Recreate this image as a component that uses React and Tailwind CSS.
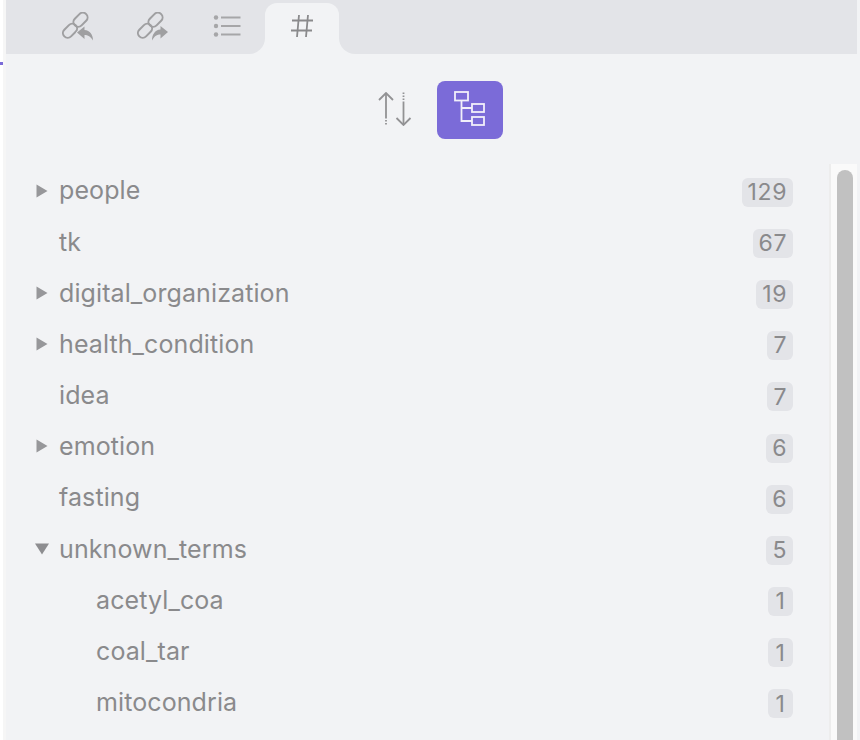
const tags = [
  { name: 'people', count: 129, arrow: 'right' },
  { name: 'tk', count: 67 },
  { name: 'digital_organization', count: 19, arrow: 'right' },
  { name: 'health_condition', count: 7, arrow: 'right' },
  { name: 'idea', count: 7 },
  { name: 'emotion', count: 6, arrow: 'right' },
  { name: 'fasting', count: 6 },
  { name: 'unknown_terms', count: 5, arrow: 'down' },
  { name: 'acetyl_coa', count: 1, child: true },
  { name: 'coal_tar', count: 1, child: true },
  { name: 'mitocondria', count: 1, child: true },
];

function LinkIcon({ flip }) {
  return (
    <svg width="32" height="29" viewBox="0 0 32 29" fill="none">
      <g stroke="#9f9fa1" strokeWidth="2">
        <rect x="0" y="14" width="16" height="9.500" rx="4.750" transform="rotate(-45 8 18.750)" />
        <rect x="10.500" y="3" width="16" height="9.500" rx="4.750" transform="rotate(-45 18.500 7.750)" />
      </g>
      {flip ? (
        <path
          d="M15 28.500c0-6 3-10.500 8.500-11V14l7.500 6-7.500 6.500v-4c-3.500 0-6 1.500-8.500 6z"
          fill="#9f9fa1"
          stroke="#e3e4e8"
          strokeWidth="1.500"
          paintOrder="stroke"
        />
      ) : (
        <path
          d="M31 28.500c0-6-3-10-8.500-10.500v-3.500L15 20.500l7.500 6.500v-4c3.500 0 6 1.500 8.500 5.500z"
          fill="#9f9fa1"
          stroke="#e3e4e8"
          strokeWidth="1.500"
          paintOrder="stroke"
        />
      )}
    </svg>
  );
}

function ListIcon() {
  return (
    <svg width="28" height="24" viewBox="0 0 28 24" fill="#a6a6a8">
      <circle cx="3" cy="3.500" r="2.200" />
      <circle cx="3" cy="12" r="2.200" />
      <circle cx="3" cy="20.500" r="2.200" />
      <rect x="8" y="2.500" width="19.500" height="2" />
      <rect x="8" y="11" width="19.500" height="2" />
      <rect x="8" y="19.500" width="19.500" height="2" />
    </svg>
  );
}

function HashIcon() {
  return (
    <svg width="22" height="22" viewBox="0 0 22 22" fill="none" stroke="#8a8a8c" strokeWidth="1.800">
      <path d="M1 5.500h21M0 15.500h21M8 0 6 22M17 0 15 22" />
    </svg>
  );
}

function SortIcon() {
  return (
    <svg width="34" height="34" viewBox="0 0 34 34" fill="none" stroke="#929294" strokeWidth="1.800">
      <path d="M1 8 8 1l7 7" />
      <path d="M8 1.500V25" />
      <path d="M8 25v8.500" strokeDasharray="1.500 1.500" />
      <path d="M25.500 0.500V10" strokeDasharray="1.500 1.500" />
      <path d="M25.500 10v22.500" />
      <path d="M18.500 26l7 7 7-7" />
    </svg>
  );
}

function TreeIcon() {
  return (
    <svg width="32" height="36" viewBox="0 0 32 36" fill="none" stroke="#f1effa" strokeWidth="1.800">
      <rect x="1" y="1" width="13" height="8.500" />
      <rect x="18" y="13" width="12" height="8" />
      <rect x="18" y="26" width="12" height="8" />
      <path d="M7.500 9.500V30H18M7.500 17H18" />
    </svg>
  );
}

function Arrow({ dir }) {
  if (dir === 'right') {
    return (
      <svg width="12" height="14" viewBox="0 0 12 14" fill="#97979a">
        <path d="M0.500 0.500 11.500 7 0.500 13.500z" />
      </svg>
    );
  }
  return (
    <svg width="14" height="12" viewBox="0 0 14 12" fill="#8d8d90">
      <path d="M0 0.500h14L7 11.500z" />
    </svg>
  );
}

function TagRow({ tag }) {
  return (
    <div className={`relative flex h-[51.2px] items-center pr-[36px] ${tag.child ? 'pl-[96px]' : 'pl-[59px]'}`}>
      {tag.arrow && (
        <span className={`absolute top-[18px] flex h-[14px] w-[14px] items-center ${tag.arrow === 'down' ? 'left-[35px]' : 'left-[36px]'}`}>
          <Arrow dir={tag.arrow} />
        </span>
      )}
      <span className="flex-1 text-[25px] tracking-[0.1px] text-[#8a8a8c]">{tag.name}</span>
      <span className="mt-[2px] flex h-[29px] min-w-[25px] items-center justify-center rounded-[6px] bg-[#e3e4e8] px-[6px] text-[23px] tracking-[0.6px] text-[#8a8a8c]">
        {tag.count}
      </span>
    </div>
  );
}

export default function App() {
  return (
    <div className="flex h-[740px] w-[860px] overflow-hidden bg-[#f2f3f5] font-['Inter',sans-serif]">
      {/* thin pane edge, with the resize handle mark */}
      <div className="relative w-[6px] shrink-0 border-r-[3px] border-[#f6f6f6] bg-white">
        <div className="absolute left-0 top-[62px] h-[3px] w-[3px] bg-[#7b6bd8]" />
      </div>
      <div className="flex min-w-0 flex-1 flex-col">
        <div className="flex h-[54px] shrink-0 items-end bg-[#e3e4e8] pl-[56px]">
          <div className="flex h-full w-[203px] items-center">
            <div className="w-[75px] pb-[1px]"><LinkIcon /></div>
            <div className="w-[76px] pb-[1px]"><LinkIcon flip /></div>
            <div className="pb-[3px]"><ListIcon /></div>
          </div>
          <div className="relative flex h-[51px] w-[74px] items-start justify-center rounded-t-[12px] bg-[#f2f3f5] pt-[12px]">
            <HashIcon />
            <span className="absolute bottom-0 left-[-16px] h-[16px] w-[16px] bg-[#f2f3f5]">
              <span className="block h-full w-full rounded-br-[16px] bg-[#e3e4e8]" />
            </span>
            <span className="absolute bottom-0 right-[-16px] h-[16px] w-[16px] bg-[#f2f3f5]">
              <span className="block h-full w-full rounded-bl-[16px] bg-[#e3e4e8]" />
            </span>
          </div>
        </div>
        <div className="flex min-h-0 flex-1">
          <div className="-ml-[6px] min-w-0 flex-1">
            <div className="flex h-[85px] items-start justify-center gap-[25px] pl-[51px] pt-[27px]">
              <div className="flex h-[58px] w-[34px] items-center justify-center pb-[3px]"><SortIcon /></div>
              <div className="flex h-[58px] w-[66px] items-center justify-center rounded-[8px] bg-[#7b6bd8] pb-[3px]"><TreeIcon /></div>
            </div>
            <div className="pt-[26.500px]">
              {tags.map((tag) => (
                <TagRow key={tag.name} tag={tag} />
              ))}
            </div>
          </div>
          <div className="mt-[110px] flex w-[28px] shrink-0 flex-col border-l-[2px] border-[#ededed] bg-[#fafafa] pl-[6px] pt-[6px]">
            <div className="min-h-0 w-[16px] flex-1 rounded-t-[8px] bg-[#c1c1c1]" />
          </div>
        </div>
      </div>
      <div className="w-[3px] shrink-0" />
    </div>
  );
}
